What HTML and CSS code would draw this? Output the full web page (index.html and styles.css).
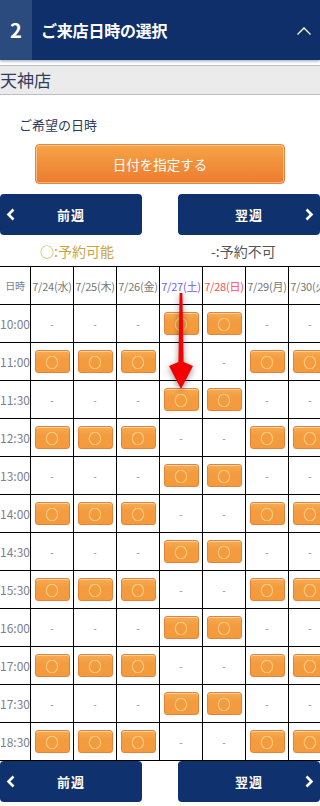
FILE: index.html
```html
<!DOCTYPE html>
<html lang="ja">
<head>
<meta charset="utf-8">
<title>ご来店日時の選択</title>
<link rel="stylesheet" href="styles.css">
</head>
<body>
<header class="step-head">
  <div class="step-num">2</div>
  <h1 class="step-title">ご来店日時の選択</h1>
  <svg class="step-toggle" width="14" height="8" viewBox="0 0 14 8"><polyline points="0.5,7.5 7,1 13.5,7.5" fill="none" stroke="#fff" stroke-width="1.3"/></svg>
</header>

<div class="store">天神店</div>

<p class="label">ご希望の日時</p>
<button class="date-btn">日付を指定する</button>

<nav class="week-nav">
  <a class="week-btn prev"><svg class="chev" width="9" height="13" viewBox="0 0 9 13"><polyline points="7.5,1.5 2.5,6.5 7.5,11.5" fill="none" stroke="#fff" stroke-width="2.6"/></svg><span>前週</span><i></i></a>
  <a class="week-btn next"><i></i><span>翌週</span><svg class="chev" width="9" height="13" viewBox="0 0 9 13"><polyline points="1.5,1.5 6.5,6.5 1.5,11.5" fill="none" stroke="#fff" stroke-width="2.6"/></svg></a>
</nav>

<div class="legend">
  <span class="ok"><span class="ring">○</span>:予約可能</span>
  <span class="ng">-:予約不可</span>
</div>

<div class="table-wrap">
<table class="sched">
  <thead>
    <tr><th class="t">日時</th><th>7/24(水)</th><th>7/25(木)</th><th>7/26(金)</th><th class="sat">7/27(土)</th><th class="sun">7/28(日)</th><th>7/29(月)</th><th>7/30(火)</th></tr>
  </thead>
  <tbody>
    <tr><th class="t">10:00</th><td>-</td><td>-</td><td>-</td><td><b>○</b></td><td><b>○</b></td><td>-</td><td>-</td></tr>
    <tr><th class="t">11:00</th><td><b>○</b></td><td><b>○</b></td><td><b>○</b></td><td>-</td><td>-</td><td><b>○</b></td><td><b>○</b></td></tr>
    <tr><th class="t">11:30</th><td>-</td><td>-</td><td>-</td><td><b>○</b></td><td><b>○</b></td><td>-</td><td>-</td></tr>
    <tr><th class="t">12:30</th><td><b>○</b></td><td><b>○</b></td><td><b>○</b></td><td>-</td><td>-</td><td><b>○</b></td><td><b>○</b></td></tr>
    <tr><th class="t">13:00</th><td>-</td><td>-</td><td>-</td><td><b>○</b></td><td><b>○</b></td><td>-</td><td>-</td></tr>
    <tr><th class="t">14:00</th><td><b>○</b></td><td><b>○</b></td><td><b>○</b></td><td>-</td><td>-</td><td><b>○</b></td><td><b>○</b></td></tr>
    <tr><th class="t">14:30</th><td>-</td><td>-</td><td>-</td><td><b>○</b></td><td><b>○</b></td><td>-</td><td>-</td></tr>
    <tr><th class="t">15:30</th><td><b>○</b></td><td><b>○</b></td><td><b>○</b></td><td>-</td><td>-</td><td><b>○</b></td><td><b>○</b></td></tr>
    <tr><th class="t">16:00</th><td>-</td><td>-</td><td>-</td><td><b>○</b></td><td><b>○</b></td><td>-</td><td>-</td></tr>
    <tr><th class="t">17:00</th><td><b>○</b></td><td><b>○</b></td><td><b>○</b></td><td>-</td><td>-</td><td><b>○</b></td><td><b>○</b></td></tr>
    <tr><th class="t">17:30</th><td>-</td><td>-</td><td>-</td><td><b>○</b></td><td><b>○</b></td><td>-</td><td>-</td></tr>
    <tr><th class="t">18:30</th><td><b>○</b></td><td><b>○</b></td><td><b>○</b></td><td>-</td><td>-</td><td><b>○</b></td><td><b>○</b></td></tr>
  </tbody>
</table>
<svg class="arrow" width="30" height="102" viewBox="-3 0 30 102"><polygon points="10.6,0 13.4,0 14.6,69 24,73 12,96 0,73 9.4,69" fill="#f40000"/></svg>
</div>

<nav class="week-nav bottom">
  <a class="week-btn prev"><svg class="chev" width="9" height="13" viewBox="0 0 9 13"><polyline points="7.5,1.5 2.5,6.5 7.5,11.5" fill="none" stroke="#fff" stroke-width="2.6"/></svg><span>前週</span><i></i></a>
  <a class="week-btn next"><i></i><span>翌週</span><svg class="chev" width="9" height="13" viewBox="0 0 9 13"><polyline points="1.5,1.5 6.5,6.5 1.5,11.5" fill="none" stroke="#fff" stroke-width="2.6"/></svg></a>
</nav>
</body>
</html>
```

FILE: styles.css
```css
* { box-sizing: border-box; }
html, body {
  margin: 0;
  padding: 0;
  width: 320px;
  overflow-x: hidden;
  background: #fff;
  font-family: "Noto Sans CJK JP", "Noto Sans", sans-serif;
}

.step-head {
  height: 60px;
  display: flex;
  align-items: center;
  background: #0f2f6b;
  box-shadow: 0 1px 3px rgba(60, 80, 120, 0.55);
  position: relative;
}
.step-num {
  width: 32px;
  height: 60px;
  background: #2b4a7e;
  color: #fff;
  font-weight: 700;
  font-size: 20px;
  line-height: 60px;
  text-align: center;
}
.step-title {
  margin: 0 0 0 9px;
  flex: 1;
  color: #fff;
  font-size: 16px;
  font-weight: 700;
  line-height: 60px;
  letter-spacing: -0.2px;
}
.step-toggle {
  margin-right: 9px;
  margin-top: 1px;
}

.store {
  margin-top: 5px;
  height: 30px;
  border-top: 1px solid #b9c0cc;
  border-bottom: 1px solid #b9c0cc;
  background: #ebebeb;
  color: #2f3d5c;
  font-size: 17px;
  line-height: 28px;
  padding-left: 0;
}

.label {
  margin: 20px 0 0;
  padding-left: 19px;
  height: 20px;
  line-height: 20px;
  font-size: 13px;
  color: #2b3a5c;
}

.date-btn {
  display: block;
  margin: 9px 0 0 35px;
  width: 250px;
  height: 40px;
  border: 1px solid #e8863c;
  border-radius: 4px;
  background: linear-gradient(#f6a446, #ec7b30);
  box-shadow: inset 0 0 0 1px rgba(255, 225, 190, 0.55);
  color: #fff;
  font-family: inherit;
  font-size: 13.5px;
  padding: 0;
}

.week-nav {
  margin-top: 10px;
  display: flex;
  justify-content: space-between;
}
.week-nav.bottom { margin-top: 0; }
.week-btn {
  width: 142px;
  height: 41px;
  border-radius: 4px;
  background: #0f316d;
  color: #fff;
  font-size: 13px;
  font-weight: 700;
  display: grid;
  grid-template-columns: 20px 1fr 20px;
  align-items: center;
  justify-items: center;
}
.week-btn.prev .chev { justify-self: start; margin-left: 6px; }
.week-btn.next .chev { justify-self: end; margin-right: 6px; }
.week-btn span { letter-spacing: 1px; }

.legend {
  height: 31px;
  display: grid;
  grid-template-columns: 160px 160px;
  align-items: center;
  font-size: 14px;
}
.legend .ok { padding-left: 40px; color: #c8a343; }
.legend .ng { padding-left: 51px; color: #555; }
.legend .ring { font-size: 14px; }

.table-wrap {
  position: relative;
  width: 320px;
  overflow: hidden;
}
.sched {
  border-collapse: separate;
  border-spacing: 0;
  table-layout: fixed;
  width: 332px;
  border-top: 1px solid #000;
}
.sched th, .sched td {
  border-right: 1px solid #000;
  border-bottom: 1px solid #000;
  height: 38px;
  padding: 0;
  text-align: center;
  vertical-align: middle;
  white-space: nowrap;
  overflow: visible;
}
.sched th.t {
  width: 31px;
  font-weight: 400;
  color: #7b7f8f;
  font-size: 12px;
  text-align: left;
}
.sched thead th {
  font-weight: 400;
  font-size: 11px;
  color: #777;
  width: 43px;
  letter-spacing: -0.2px;
}
.sched thead th.t { font-size: 10px; text-align: center; }
.sched thead th.sat { color: #7356ff; }
.sched thead th.sun { color: #ff4a4a; }
.sched td {
  width: 43px;
  color: #8a8a8a;
  font-size: 10px;
}
.sched td b {
  display: inline-block;
  width: 35px;
  height: 23px;
  border: 1px solid #e6823b;
  border-radius: 3px;
  background: linear-gradient(#f7ab52, #f39c3f 40%, #f39a3c);
  box-shadow: inset 0 1px 0 rgba(255, 230, 190, 0.7);
  color: #fff3c4;
  font-weight: 400;
  font-size: 13px;
  line-height: 21px;
  vertical-align: middle;
}

.arrow {
  position: absolute;
  left: 166px;
  top: 27px;
  filter: drop-shadow(0 2px 3px rgba(0, 0, 0, 0.45));
}
```
